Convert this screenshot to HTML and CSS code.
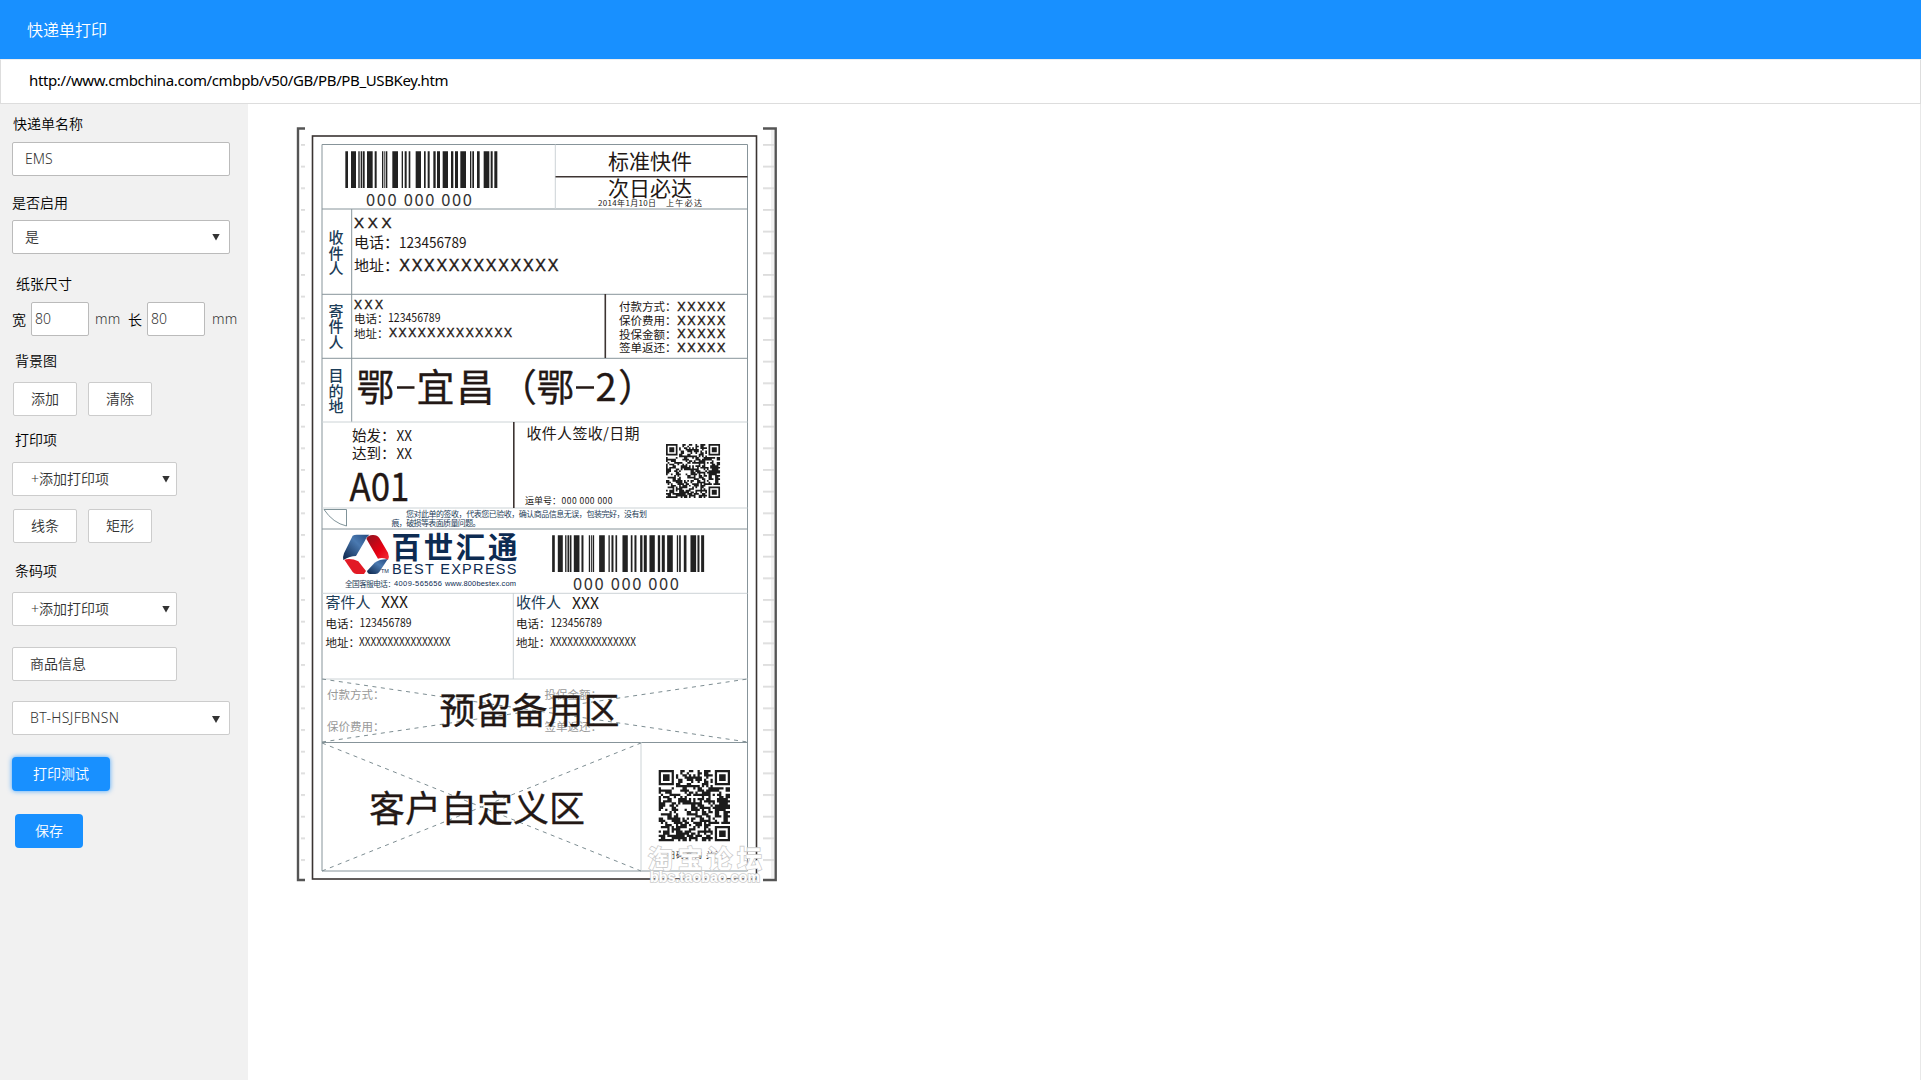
FILE: index.html
```html
<!DOCTYPE html>
<html lang="zh-CN">
<head>
<meta charset="utf-8">
<title>快递单打印</title>
<link rel="stylesheet" href="styles.css">
</head>
<body>
<div class="app">
  <header class="topbar"><h1 class="topbar-title">快递单打印</h1></header>
  <div class="address">http://www.cmbchina.com/cmbpb/v50/GB/PB/PB_USBKey.htm</div>
  <div class="body">
    <aside class="sidebar">
      <div class="group g-name">
        <label class="label">快递单名称</label>
        <div class="field">EMS</div>
      </div>
      <div class="group g-enable">
        <label class="label">是否启用</label>
        <div class="field">是<i class="caret"></i></div>
      </div>
      <div class="group g-size">
        <label class="label">纸张尺寸</label>
        <div class="size-row">
          <span class="dim">宽</span><div class="field num">80</div><span class="unit">mm</span>
          <span class="dim">长</span><div class="field num">80</div><span class="unit">mm</span>
        </div>
      </div>
      <div class="group g-bg">
        <label class="label">背景图</label>
        <div class="btn-row"><button class="btn">添加</button><button class="btn">清除</button></div>
      </div>
      <div class="group g-print">
        <label class="label">打印项</label>
        <div class="field short plus">+添加打印项<i class="caret"></i></div>
        <div class="btn-row"><button class="btn">线条</button><button class="btn">矩形</button></div>
      </div>
      <div class="group g-code">
        <label class="label">条码项</label>
        <div class="field short plus">+添加打印项<i class="caret"></i></div>
        <div class="field short indent goods">商品信息</div>
        <div class="field indent printer">BT-HSJFBNSN<i class="caret low"></i></div>
      </div>
      <button class="primary test">打印测试</button>
      <button class="primary save">保存</button>
    </aside>
    <main class="canvas">
      <svg class="waybill" width="482" height="758" viewBox="296 126 482 758">
        <defs>
          <linearGradient id="navy" x1="0" y1="1" x2="1" y2="0"><stop offset="0" stop-color="#0a2348"/><stop offset=".6" stop-color="#4a79b0"/><stop offset="1" stop-color="#234a80"/></linearGradient>
          <linearGradient id="red" x1="0" y1="0" x2="1" y2="1"><stop offset="0" stop-color="#8c1420"/><stop offset=".6" stop-color="#e60012"/><stop offset="1" stop-color="#f0303a"/></linearGradient>
          <pattern id="ticks" x="0" y="144" width="20" height="21.67" patternUnits="userSpaceOnUse"><rect width="20" height="1.8" fill="#dcdcdc"/></pattern>
          <g id="barcode" fill="#222"></g>
        </defs>

        <!-- rulers -->
        <rect x="301" y="143" width="4" height="720" fill="url(#ticks)"/>
        <rect x="771" y="130" width="3" height="748" fill="#f1f1f1"/>
        <rect x="763" y="143" width="11" height="720" fill="url(#ticks)"/>
        <path class="bracket" d="M305 128.5H298V880H305M763 128.5H775.7V880H763"/>

        <!-- frame and grid -->
        <rect class="frame" x="312.5" y="136" width="444" height="743"/>
        <path class="grid" d="M322 144.5H747.5V871H322ZM322 209H747.5M322 294.3H747.5M322 358.3H747.5M322 529H747.5M322 742.5H747.5M351.7 209V422"/>
        <path class="grid pale" d="M322 422H747.5M322 508H747.5M322 593.3H747.5M322 679H747.5M555.3 144.5V209M513.3 593V679M641 742V871"/>
        <path class="rule" d="M555.5 176.7H747.5M605.3 294V358M513.8 422V508"/>
        <path class="dash" d="M322 679L747.5 742M322 742L747.5 679M322 743L641 871M322 871L641 743"/>

        <use href="#barcode"/>
        <text x="366" y="206" font-size="16.5" textLength="106" class="soft">000 000 000</text>
        <text x="608" y="168.8" font-size="21" textLength="84">标准快件</text>
        <text x="608" y="195.6" font-size="21" textLength="84">次日必达</text>
        <text x="598" y="206.3" font-size="8" textLength="58">2014年1月10日</text>
        <text x="666" y="206.3" font-size="8" textLength="36">上午必达</text>

        <g class="navy medium" font-size="15">
          <text x="328.5 328.5 328.5" y="243 258.5 273.5">收件人</text>
          <text x="328.5 328.5 328.5" y="317 332 347.5">寄件人</text>
          <text x="328.5 328.5 328.5" y="381 396.5 411.5">目的地</text>
        </g>

        <g class="wide">
          <text x="354" y="228.3" font-size="15" textLength="37.5">XXX</text>
          <text x="399.3" y="270.8" font-size="16" textLength="159">XXXXXXXXXXXXX</text>
          <text x="354" y="309" font-size="12" textLength="29">XXX</text>
          <text x="389" y="337.3" font-size="12" textLength="123">XXXXXXXXXXXXX</text>
          <text x="677.3" y="311" font-size="12.5" textLength="48">XXXXX</text>
          <text x="677.3" y="324.7" font-size="12.5" textLength="48">XXXXX</text>
          <text x="677.3" y="338.3" font-size="12.5" textLength="48">XXXXX</text>
          <text x="677.3" y="352" font-size="12.5" textLength="48">XXXXX</text>
        </g>
        <text x="354" y="248" font-size="15">电话：</text>
        <text x="354" y="271" font-size="15">地址：</text>
        <text x="354" y="322.5" font-size="11.5">电话：</text>
        <text x="354" y="337.8" font-size="11.5">地址：</text>
        <text x="399" y="247.7" font-size="14.5" textLength="67.5" lengthAdjust="spacingAndGlyphs">123456789</text>
        <text x="388" y="322" font-size="12" textLength="52.5" lengthAdjust="spacingAndGlyphs">123456789</text>
        <g font-size="11.5">
          <text x="619" y="311.3">付款方式：</text>
          <text x="619" y="325">保价费用：</text>
          <text x="619" y="338.5">投保金额：</text>
          <text x="619" y="352.2">签单返还：</text>
        </g>

        <g font-size="38" class="firm">
          <text x="356.5 416.5 456.5" y="401.3">鄂宜昌</text>
          <text x="499" y="401">（</text>
          <text x="536.5" y="401.3">鄂</text>
          <text x="595.5" y="401.3">2</text>
          <text x="618" y="401">）</text>
        </g>
        <path class="minus" d="M397 387.5H414.5M576 387.5H594"/>

        <text x="352" y="441">始发：</text>
        <text x="352" y="459">达到：</text>
        <text x="396.5" y="440.5" textLength="15.5" lengthAdjust="spacingAndGlyphs">XX</text>
        <text x="396.5" y="458.7" textLength="15.5" lengthAdjust="spacingAndGlyphs">XX</text>
        <text x="349.5" y="501.3" font-size="38.5" textLength="60" lengthAdjust="spacingAndGlyphs" class="firm">A01</text>
        <text x="526.5" y="439.2" font-size="15" textLength="113">收件人签收/日期</text>
        <text x="525" y="504" font-size="9">运单号：</text>
        <text x="561.5" y="503.6" font-size="8.5" textLength="51">000 000 000</text>
        <g class="navy" font-size="8">
          <text x="406" y="517" textLength="241">您对此单的签收，代表您已验收，确认商品信息无误，包装完好，没有划</text>
          <text x="391.5" y="526.3" textLength="89">痕，破损等表面质量问题。</text>
        </g>
        <path class="curl" d="M324 509.5H346.5V526Q333 523 324 509.5Z"/>
        <g id="qr-small" transform="translate(666 444) scale(1.636)" fill="#1c1c1c"></g>

        <!-- carrier logo -->
        <g transform="translate(290 500) scale(.3333)">
          <path fill="url(#navy)" d="M188 107Q193 104 200 104H238Q228 112 224 124L198 168Q180 168 160 180Q158 170 162 160Z"/>
          <path fill="url(#red)" d="M229 116Q235 104 250 105Q262 105 268 114L294 158Q299 170 294 180Q280 170 264 176Z"/>
          <path fill="#e21a25" d="M163 179Q184 174 205 184L228 213L222 222H200Q193 222 188 216Z"/>
          <path fill="url(#navy)" d="M293 178Q272 176 254 188L231 213Q233 222 240 222H256Q264 222 268 216Z"/>
        </g>
        <text class="brand" x="391.5" y="557.8" font-size="29.5" textLength="126">百世汇通</text>
        <text class="latin" x="392" y="573.7" font-size="14.5" textLength="124.5">BEST EXPRESS</text>
        <text class="latin" x="381" y="573.3" font-size="5.5">TM</text>
        <g class="navy">
          <text x="345" y="586.5" font-size="7.6" textLength="50">全国客服电话：</text>
          <text x="394" y="586.3" font-size="7.5" textLength="48" class="latin">4009-565656</text>
          <text x="445" y="586.3" font-size="7.5" textLength="71" class="latin">www.800bestex.com</text>
        </g>
        <use href="#barcode" x="206.8" y="384"/>
        <text x="573" y="590" font-size="16.5" textLength="106" class="soft">000 000 000</text>

        <g class="navy" font-size="15">
          <text x="325.5" y="608.3">寄件人</text>
          <text x="516" y="608.3">收件人</text>
        </g>
        <text x="381" y="608.3" font-size="16" textLength="27" lengthAdjust="spacingAndGlyphs">XXX</text>
        <text x="572" y="609.3" font-size="16" textLength="27" lengthAdjust="spacingAndGlyphs">XXX</text>
        <g font-size="11.5">
          <text x="325.5" y="627.8">电话：</text>
          <text x="325.5" y="646.5">地址：</text>
          <text x="516" y="627.8">电话：</text>
          <text x="516" y="646.5">地址：</text>
          <text x="359.5" y="627.3" textLength="52" lengthAdjust="spacingAndGlyphs">123456789</text>
          <text x="550.5" y="627.3" textLength="51.5" lengthAdjust="spacingAndGlyphs">123456789</text>
          <text x="359" y="646.3" textLength="91.5" lengthAdjust="spacingAndGlyphs">XXXXXXXXXXXXXXXX</text>
          <text x="550" y="646.3" textLength="86" lengthAdjust="spacingAndGlyphs">XXXXXXXXXXXXXXX</text>
        </g>

        <g font-size="11.5" class="muted">
          <text x="327" y="698.8">付款方式：</text>
          <text x="327" y="730.6">保价费用：</text>
          <text x="544.5" y="698.8">投保金额：</text>
          <text x="544.5" y="730.6">签单返还：</text>
        </g>
        <text x="439.5" y="723.5" font-size="36" textLength="180" class="firm">预留备用区</text>
        <text x="369" y="822.3" font-size="36" textLength="216" class="firm">客户自定义区</text>
        <g id="qr-large" transform="translate(658.7 770) scale(2.158)" fill="#1c1c1c"></g>
        <text x="667" y="858" font-size="8" textLength="56">扫码查询 关注</text>
        <g class="watermark">
          <text x="648" y="868" font-size="25" textLength="114">淘宝论坛</text>
          <text x="650" y="881.5" font-size="14" textLength="110" class="latin-wm">bbs.taobao.com</text>
        </g>
      </svg>
    </main>
  </div>
</div>
<script src="codes.js"></script>
</body>
</html>
```
FILE: codes.js
```js
const NS = 'http://www.w3.org/2000/svg';
function path(parent, d) {
  const p = document.createElementNS(NS, 'path');
  p.setAttribute('d', d);
  parent.appendChild(p);
}

// Barcode: start/end of every bar, in thirds of a pixel
const bars = [[166,174],[183,198],[205,209],[212,217],[219,224],[231,248],[254,260],[276,280],[283,286],[288,292],[307,324],[335,339],[344,350],[356,361],[377,393],[402,407],[413,419],[430,437],[441,450],[458,474],[483,490],[495,504],[511,528],[540,544],[547,552],[561,569],[581,598],[602,608],[613,622]];
path(document.getElementById('barcode'), bars.map(([a, b]) => `M${290 + a / 3} 151.2h${(b - a) / 3}v36.8h${-(b - a) / 3}z`).join(''));

// QR symbol: three finder patterns, the bottom-left corner carries data
const SIZE = 33;
let seed = 20140110;
function next() {
  seed = (seed * 1103515245 + 12345) % 2147483648;
  return seed / 2147483648;
}
const grid = [];
for (let y = 0; y < SIZE; y++) {
  grid.push([]);
  for (let x = 0; x < SIZE; x++) {
    const left = x ? grid[y][x - 1] : 0;
    const up = y ? grid[y - 1][x] : 0;
    grid[y].push(next() < 0.46 + 0.09 * (left + up) ? 1 : 0);
  }
}
function finder(ox, oy) {
  for (let y = -1; y < 8; y++) for (let x = -1; x < 8; x++) {
    const gy = oy + y, gx = ox + x;
    if (gy < 0 || gx < 0 || gy >= SIZE || gx >= SIZE) continue;
    const ring = Math.max(Math.abs(x - 3), Math.abs(y - 3));
    grid[gy][gx] = ring === 3 || ring < 2 ? 1 : 0;
  }
}
finder(0, 0);
finder(SIZE - 7, 0);
finder(SIZE - 7, SIZE - 7);
const d = grid.map((r, y) => r.map((c, x) => c ? `M${x} ${y}h1.04v1.04h-1.04z` : '').join('')).join('');
path(document.getElementById('qr-small'), d);
path(document.getElementById('qr-large'), d);
```
FILE: styles.css
```css
* { box-sizing: border-box; }
body {
  margin: 0;
  font-family: "Noto Sans", "Noto Sans CJK SC", sans-serif;
  font-size: 14px;
  color: #333;
  background: #fff;
}
.app { display: flex; flex-direction: column; height: 1080px; overflow: hidden; }

.topbar { display: flex; align-items: center; height: 59px; padding: 0 0 2px 27px; background: #1890ff; }
.topbar-title { margin: 0; font: 350 16px/24px "Noto Sans CJK SC", sans-serif; color: #fff; }

.address {
  height: 45px;
  padding-left: 28px;
  border: 1px solid #ddd;
  border-top-color: #eee;
  font: 400 15px/41px "Noto Sans", sans-serif;
  letter-spacing: -.37px;
  color: #000;
}

.body { display: flex; flex: 1; border-right: 1px solid #e8e8e8; }
.sidebar {
  display: flex;
  flex-direction: column;
  align-items: flex-start;
  width: 248px;
  padding: 10px 0 0 12px;
  background: #f1f1f1;
  font-weight: 350;
}
.group { display: flex; flex-direction: column; align-items: flex-start; }
.label { height: 20px; line-height: 20px; color: #000; }

.field {
  display: flex;
  align-items: center;
  justify-content: space-between;
  width: 218px;
  height: 34px;
  padding: 0 9px 0 12px;
  border: 1px solid #bbb;
  border-radius: 2px;
  background: #fff;
  line-height: 20px;
}
.short { width: 165px; padding-right: 6px; border-color: #ccc; }
.plus { padding-left: 18px; }
.indent { padding-left: 17px; border-color: #ccc; }
.printer { letter-spacing: .35px; }
.caret { width: 8px; height: 7px; background: #333; clip-path: polygon(0 0, 100% 0, 50% 100%); }
.caret.low { margin-top: 3px; }

.g-name { gap: 8px; }
.g-name .label { padding-left: 1px; }
.g-enable { gap: 7px; margin-top: 17px; }
.g-enable .label { line-height: 19px; }
.g-size { gap: 8px; margin-top: 20px; }
.g-size .label { padding-left: 4px; }
.g-bg { gap: 11px; margin-top: 15px; }
.g-bg .label, .g-print .label, .g-code .label { padding-left: 3px; }
.g-print { gap: 12px; margin-top: 14px; }
.g-print .btn-row { margin-top: 1px; }
.g-code { gap: 11px; margin-top: 18px; }
.g-code .label { line-height: 19px; }
.goods { margin-top: 10px; }
.printer { margin-top: 9px; }

.size-row { display: flex; align-items: center; }
.dim { width: 19px; color: #000; }
.num { width: 58px; padding: 0 3px 1px; }
.unit { width: 39px; padding: 0 0 2px 6px; letter-spacing: .3px; }
.size-row .unit:last-child { padding-left: 7px; }

.btn-row { display: flex; gap: 11px; padding-left: 1px; }
.btn, .primary { font: 350 14px/20px "Noto Sans CJK SC", sans-serif; padding: 0 0 2px; }
.btn { width: 64px; height: 34px; border: 1px solid #ccc; border-radius: 2px; background: #fff; color: #333; }
.primary { height: 34px; border: 0; border-radius: 4px; background: #1890ff; color: #fff; }
.test { width: 98px; margin-top: 22px; box-shadow: 0 0 5px rgba(24, 144, 255, .8); }
.save { width: 68px; margin: 23px 0 0 3px; }

.canvas { flex: 1; padding: 22px 0 0 48px; }
.waybill { display: block; overflow: visible; font-family: "Noto Sans CJK SC", sans-serif; font-size: 14.5px; fill: #231815; }
.bracket { fill: none; stroke: #555; stroke-width: 2.4; }
.frame { fill: none; stroke: #3a3432; stroke-width: 1.6; }
.grid { fill: none; stroke: #87949a; stroke-width: 1; }
.pale { stroke: #ccd3d6; }
.rule { fill: none; stroke: #3d3432; stroke-width: 1.6; }
.dash { fill: none; stroke: #7d8d92; stroke-width: 1; stroke-dasharray: 4 4.5; }
.minus { fill: none; stroke: #231815; stroke-width: 2.6; }
.curl { fill: none; stroke: #5f777f; stroke-width: .8; }
.soft { fill: #333; }
.medium { font-weight: 500; }
.firm { stroke: #231815; stroke-width: .3; }
.wide { font-family: "Liberation Sans", sans-serif; stroke: #231815; stroke-width: .4; }
.navy { fill: #1c3d58; }
.muted { fill: #999; }
.brand { fill: #0d2b52; font-weight: 700; }
.latin { fill: #0d2b52; font-family: "Liberation Sans", sans-serif; }
.watermark { fill: #fff; stroke: #ccc; stroke-width: 1.6; paint-order: stroke; font-weight: 700; }
.latin-wm { font-family: "Liberation Sans", sans-serif; }
```
